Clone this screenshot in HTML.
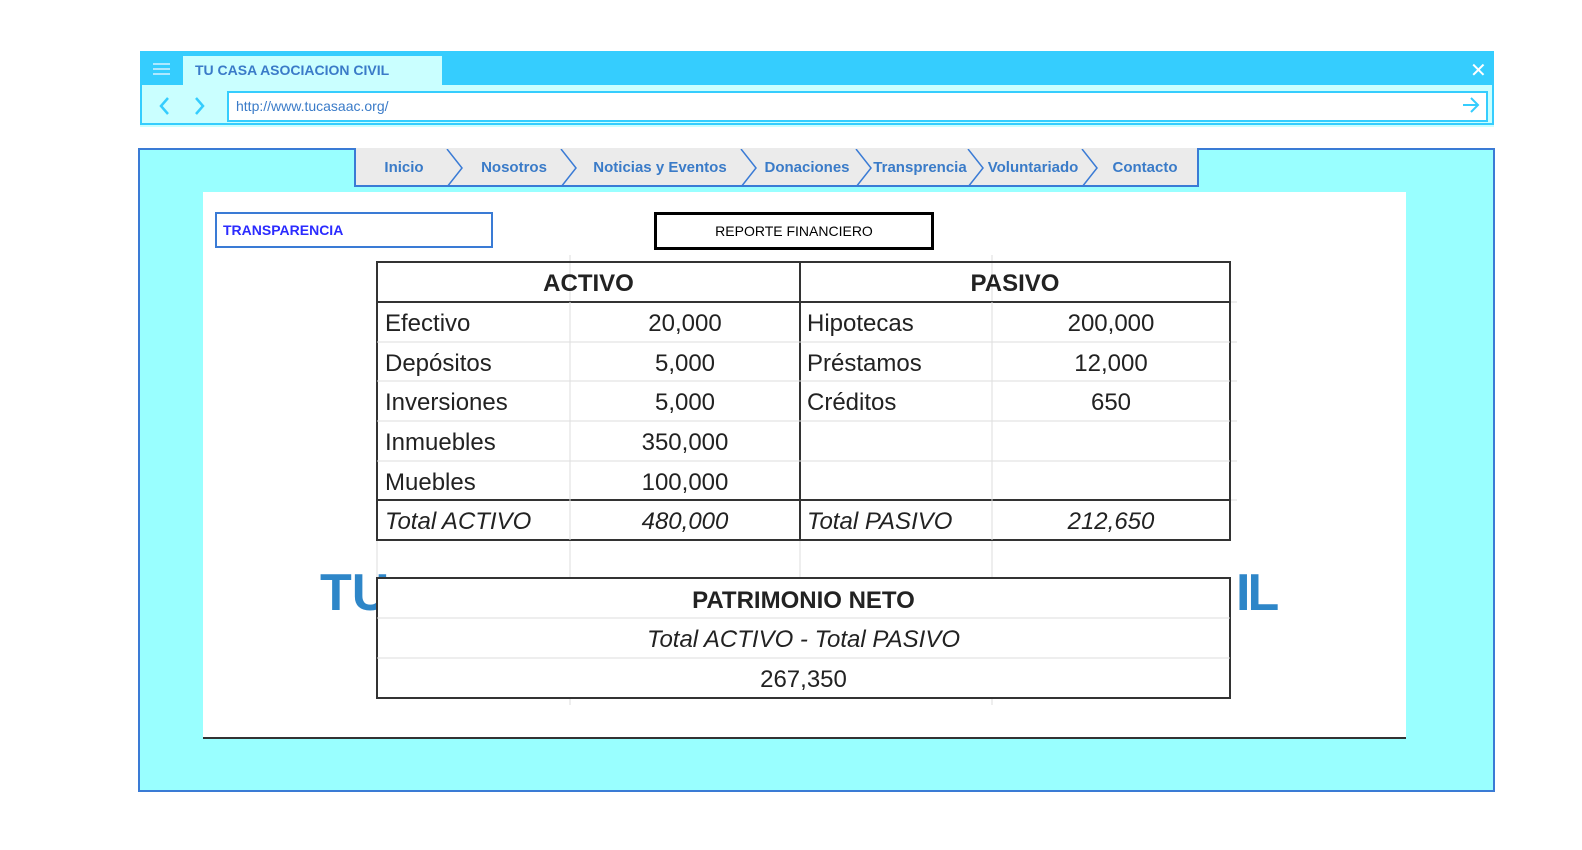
<!DOCTYPE html><html><head><style>
body{margin:0;width:1582px;height:850px;background:#fff;position:relative;font-family:"Liberation Sans",sans-serif;overflow:hidden}
.a{position:absolute}
.t{position:absolute;font-size:24px;color:#222;line-height:40px;white-space:nowrap}
.c{text-align:center}
.n{position:absolute;top:149px;height:38px;line-height:38px;font-size:15px;font-weight:bold;color:#3a7bc8;text-align:center}
</style></head><body>
<!-- browser chrome -->
<div class="a" style="left:140px;top:51px;width:1354px;height:76px;background:#caffff;border:0"></div>
<div class="a" style="left:140px;top:51px;width:1354px;height:34px;background:#35cdfe"></div>
<div class="a" style="left:183px;top:56px;width:259px;height:29px;background:#caffff"></div>
<div class="a" style="left:195px;top:56px;line-height:29px;font-size:14px;font-weight:bold;color:#3a7bc8">TU CASA ASOCIACION CIVIL</div>
<div class="a" style="left:153px;top:63px;width:17px;height:2px;background:#aee8ff;box-shadow:0 5px 0 #aee8ff,0 10px 0 #aee8ff"></div>
<div class="a" style="left:140px;top:51px;width:1350px;height:72px;border:2px solid #35cdfe;border-top:0"></div>
<div class="a" style="left:1470px;top:58px;font-size:20px;color:#fff">✕</div>
<svg class="a" style="left:155px;top:95px" width="60" height="22"><path d="M13 3l-7 8 7 8M41 3l7 8-7 8" stroke="#35cdfe" stroke-width="2.5" fill="none"/></svg>
<div class="a" style="left:227px;top:91px;width:1257px;height:27px;background:#fff;border:2px solid #35cdfe"></div>
<div class="a" style="left:236px;top:98px;font-size:14px;color:#3a7bc8">http://www.tucasaac.org/</div>
<svg class="a" style="left:1462px;top:97px" width="18" height="16"><path d="M1 8h15M9 1l7 7-7 7" stroke="#35cdfe" stroke-width="2" fill="none"/></svg>
<!-- page -->
<div class="a" style="left:138px;top:148px;width:1353px;height:640px;background:#99ffff;border:2px solid #3a7bd5"></div>
<div class="a" style="left:354px;top:148px;width:841px;height:37px;background:#ebebeb;border:2px solid #3a7bd5;border-top:0"></div>
<svg class="a" style="left:354px;top:149px" width="845" height="38"><g stroke="#3a7bd5" stroke-width="1.5" fill="none"><path d="M93 0l15 19-15 19M207 0l15 19-15 19M387 0l15 19-15 19M502 0l15 19-15 19M614 0l15 19-15 19M728 0l15 19-15 19"/></g></svg>
<div class="n" style="left:364px;width:80px">Inicio</div>
<div class="n" style="left:464px;width:100px">Nosotros</div>
<div class="n" style="left:580px;width:160px">Noticias y Eventos</div>
<div class="n" style="left:757px;width:100px">Donaciones</div>
<div class="n" style="left:870px;width:100px">Transprencia</div>
<div class="n" style="left:983px;width:100px">Voluntariado</div>
<div class="n" style="left:1095px;width:100px">Contacto</div>
<div class="a" style="left:203px;top:192px;width:1203px;height:545px;background:#fff;border-bottom:2px solid #333"></div>
<div class="a" style="left:215px;top:212px;width:274px;height:32px;border:2px solid #3a7bd5;line-height:32px;font-size:14px;font-weight:bold;color:#2b2bff;padding-left:6px;box-sizing:content-box;width:268px">TRANSPARENCIA</div>
<div class="a" style="left:654px;top:212px;width:274px;height:32px;border:3px solid #000;line-height:32px;font-size:14px;text-align:center;color:#000">REPORTE FINANCIERO</div>
<!-- TU ... IL blue logo -->
<div class="a" style="left:320px;top:563px;font-size:52px;font-weight:bold;color:#2e86c8;line-height:60px">TU</div>
<div class="a" style="left:1236px;top:563px;font-size:52px;font-weight:bold;color:#2e86c8;line-height:60px;letter-spacing:-3px">IL</div>
<!-- grid -->
<svg class="a" style="left:0;top:0" width="1582" height="850">
<g stroke="#ddd" stroke-width="1"><path d="M570 255V705M992 255V705M1230 302H1237M1230 342H1237M1230 381H1237M1230 421H1237M1230 461H1237M1230 500H1237M377 540V578M800 540V578"/></g>
<rect x="377" y="262" width="853" height="278" fill="none" stroke="#333" stroke-width="2"/>
<rect x="377" y="578" width="853" height="120" fill="#fff" stroke="#333" stroke-width="2"/>
<path d="M800 262V540M377 302H1230M377 500H1230" stroke="#333" stroke-width="2"/>
<path d="M377 342H1230M377 381H1230M377 421H1230M377 461H1230M570 302V540M992 302V540M377 618H1230M377 658H1230" stroke="#ddd"/>
<path d="M377 578H1230" stroke="#333" stroke-width="2"/>
</svg>
<div class="t c" style="left:377px;top:264px;width:423px;font-weight:bold">ACTIVO</div>
<div class="t c" style="left:800px;top:264px;width:430px;font-weight:bold">PASIVO</div>
<div class="t" style="left:385px;top:304px">Efectivo</div><div class="t c" style="left:600px;top:304px;width:170px">20,000</div>
<div class="t" style="left:385px;top:344px">Depósitos</div><div class="t c" style="left:600px;top:344px;width:170px">5,000</div>
<div class="t" style="left:385px;top:383px">Inversiones</div><div class="t c" style="left:600px;top:383px;width:170px">5,000</div>
<div class="t" style="left:385px;top:423px">Inmuebles</div><div class="t c" style="left:600px;top:423px;width:170px">350,000</div>
<div class="t" style="left:385px;top:463px">Muebles</div><div class="t c" style="left:600px;top:463px;width:170px">100,000</div>
<div class="t" style="left:385px;top:502px;font-style:italic">Total ACTIVO</div><div class="t c" style="left:600px;top:502px;width:170px;font-style:italic">480,000</div>
<div class="t" style="left:807px;top:304px">Hipotecas</div><div class="t c" style="left:1026px;top:304px;width:170px">200,000</div>
<div class="t" style="left:807px;top:344px">Préstamos</div><div class="t c" style="left:1026px;top:344px;width:170px">12,000</div>
<div class="t" style="left:807px;top:383px">Créditos</div><div class="t c" style="left:1026px;top:383px;width:170px">650</div>
<div class="t" style="left:807px;top:502px;font-style:italic">Total PASIVO</div><div class="t c" style="left:1026px;top:502px;width:170px;font-style:italic">212,650</div>
<div class="t c" style="left:377px;top:581px;width:853px;font-weight:bold">PATRIMONIO NETO</div>
<div class="t c" style="left:377px;top:620px;width:853px;font-style:italic">Total ACTIVO - Total PASIVO</div>
<div class="t c" style="left:377px;top:660px;width:853px">267,350</div>
</body></html>
